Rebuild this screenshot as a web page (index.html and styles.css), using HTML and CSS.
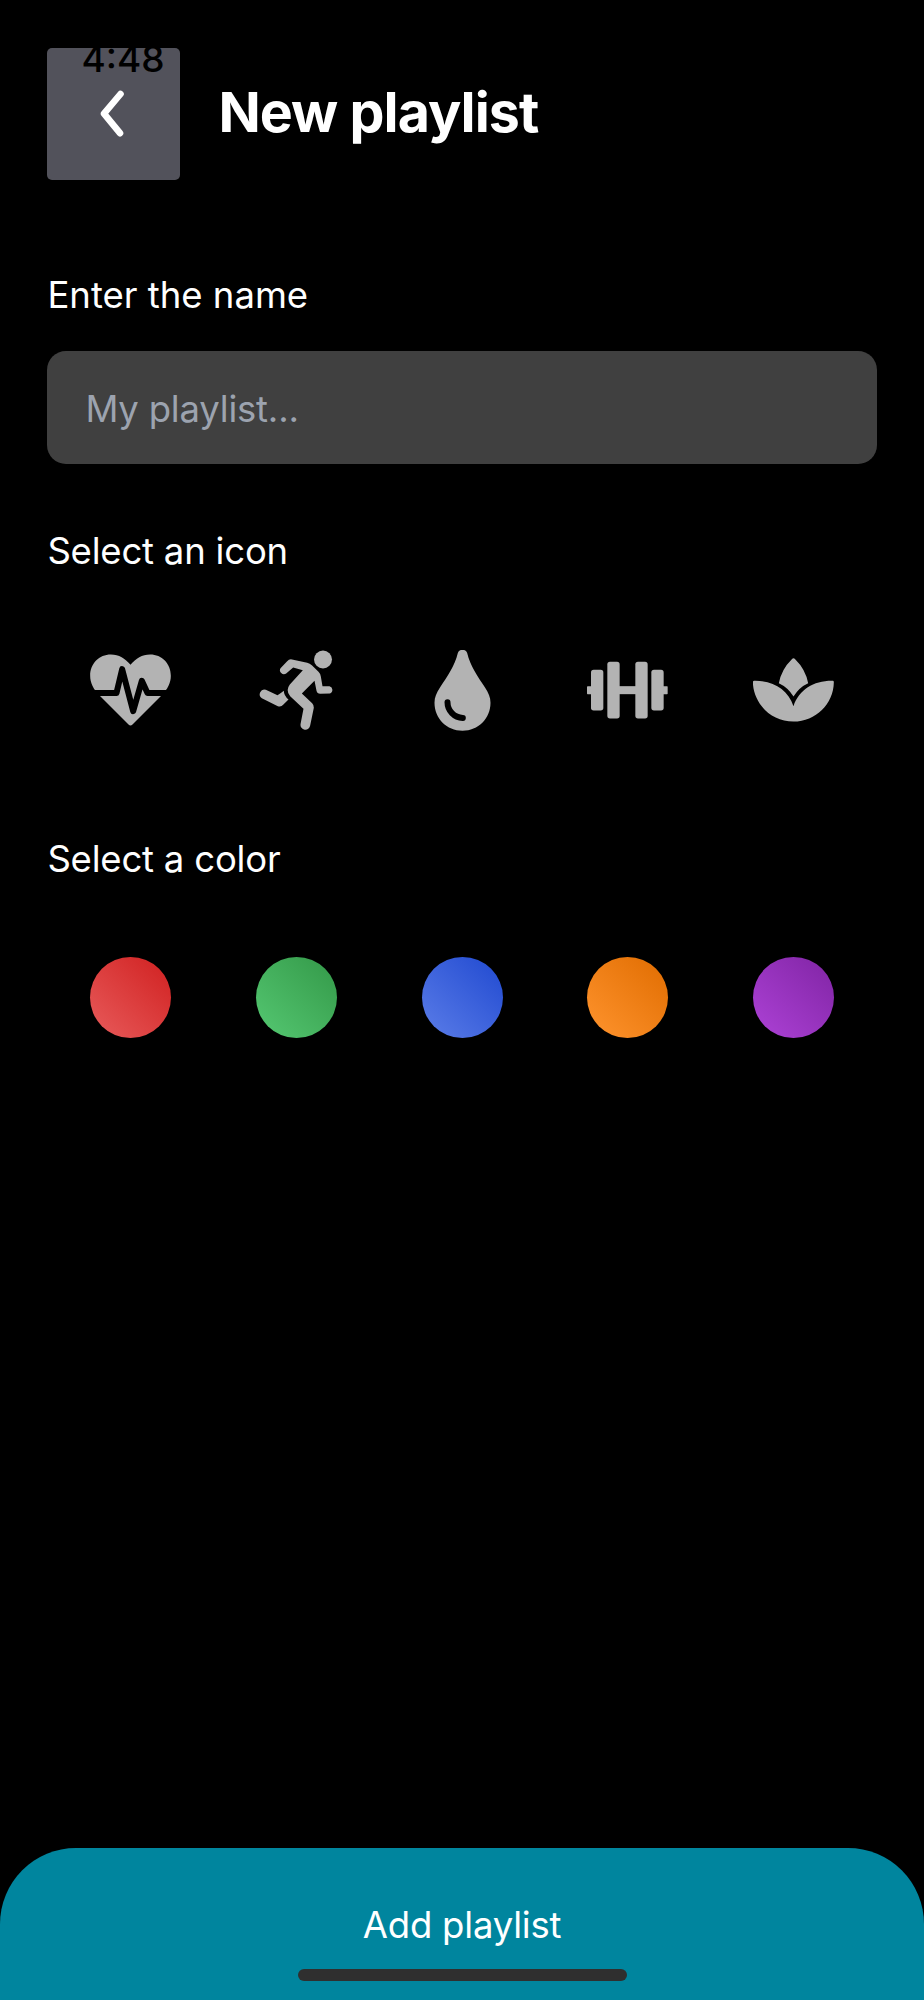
FILE: index.html
```html
<!DOCTYPE html>
<html lang="en">
<head>
<meta charset="utf-8">
<title>New playlist</title>
<link rel="stylesheet" href="styles.css">
</head>
<body>
<div class="screen">
  <header class="header">
    <button class="back" aria-label="Back">
      <svg class="chevron" viewBox="0 0 24 48"><path d="M20.5 4 4 23.7 20 43.2"/></svg>
      <span class="time">4:48</span>
    </button>
    <h1 class="title">New playlist</h1>
  </header>

  <main class="form">
    <section class="group">
      <div class="label label-name">Enter the name</div>
      <div class="field">My playlist...</div>
    </section>

    <section class="group">
      <div class="label">Select an icon</div>
      <div class="row">
        <div class="cell"><svg class="icon" viewBox="59.5 58.5 243 243">
          <path d="M181 103C164 84 147 72 122 72C87 72 60 99 60 136C60 158 70 177 88 195L175 282Q181 288 187 282L274 195C292 177 302 158 302 136C302 99 275 72 240 72C215 72 198 84 181 103Z"/>
          <path class="pulse" d="M50 187.500H139L156 116L189 242L215 151L232 187.500H315"/>
        </svg></div>
        <div class="cell"><svg class="icon" viewBox="557.5 58.500 243 243">
          <circle cx="758.500" cy="87" r="27"/>
          <path d="M662 86L711 97Q719 99 725 104L745 124Q751 130 752 138L757 167L778 167A11.500 11.500 0 0 1 779 189L750 190Q741 190 739 181L733 151L695 189L726 218Q732 224 731 232L720 285A14.500 14.500 0 0 1 691 281L700 235L660 197Q645 180 659 162L698 119L669 111L648 129A12 12 0 0 1 631 113L651 92Q656 86 662 86Z"/>
          <path d="M587 178L622 194Q630 190 641 181Q641 196 655 207L639 223Q633 230 623 227L575 203A14 14 0 0 1 587 178Z"/>
        </svg></div>
        <div class="cell"><svg class="icon" viewBox="34.500 58 243 243">
          <path d="M142 67C146 54 166 54 170 67C179 106 202 138 224 171C234 187 240 199 240 216C240 263 203 300 156 300C109 300 72 263 72 216C72 199 78 187 88 171C110 138 133 106 142 67Z"/>
          <path class="shine" d="M111 215C111 240 131 261 157 262"/>
        </svg></div>
        <div class="cell"><svg class="icon" viewBox="532 58.500 243 243">
          <rect x="532" y="167" width="18" height="24" rx="2"/>
          <rect x="756" y="167" width="18" height="24" rx="2"/>
          <rect x="620" y="167" width="65" height="24"/>
          <rect x="544" y="118" width="37" height="122" rx="8"/>
          <rect x="593" y="94" width="37" height="170" rx="8"/>
          <rect x="677" y="94" width="37" height="170" rx="8"/>
          <rect x="725" y="118" width="37" height="122" rx="8"/>
        </svg></div>
        <div class="cell"><svg class="icon" viewBox="69.500 58.500 243 243">
          <path d="M186 86Q191 81 196 86Q227 116 235 158Q208 170 191 198Q175 171 147 158Q155 116 186 86Z"/>
          <path d="M73 151C130 150 174 177 191 227C208 177 252 150 309 151Q312 151 312 155C311 220 258 273 191 273C124 273 71 220 69 155Q69 151 73 151Z"/>
        </svg></div>
      </div>
    </section>

    <section class="group">
      <div class="label">Select a color</div>
      <div class="row">
        <div class="cell"><span class="dot red"></span></div>
        <div class="cell"><span class="dot green"></span></div>
        <div class="cell"><span class="dot blue"></span></div>
        <div class="cell"><span class="dot orange"></span></div>
        <div class="cell"><span class="dot purple"></span></div>
      </div>
    </section>
  </main>

  <footer class="footer">
    Add playlist
    <span class="home"></span>
  </footer>
</div>
</body>
</html>
```
FILE: styles.css
```css
* { box-sizing: border-box; }
body { margin: 0; background: #000; }
.screen {
  display: flex;
  flex-direction: column;
  width: 924px;
  height: 2000px;
  padding-top: 47.5px;
  background: #000;
  color: #fff;
  font-family: Inter, "Liberation Sans", sans-serif;
  font-size: 36.5px;
  letter-spacing: -0.2px;
  overflow: hidden;
}
.header { display: flex; align-items: center; gap: 38.5px; padding: 0 47.4px; }
.back {
  position: relative;
  display: flex;
  align-items: center;
  justify-content: center;
  width: 132.5px;
  height: 132.5px;
  padding: 0;
  border: 0;
  border-radius: 5px;
  background: #52525b;
  font-family: inherit;
}
.chevron { width: 24px; height: 48px; margin-right: 3px; fill: none; stroke: #fff; stroke-width: 6.6; stroke-linecap: round; stroke-linejoin: round; }
.time {
  position: absolute;
  left: 34px;
  top: -11px;
  line-height: 44px;
  font-size: 37px;
  font-weight: 500;
  letter-spacing: 0;
  color: #000;
}
.title { margin: 0; padding-bottom: 3px; font-size: 55.5px; line-height: 66px; font-weight: 700; letter-spacing: -0.95px; white-space: nowrap; }
.form { display: flex; flex-direction: column; gap: 57.5px; padding: 86px 47.4px 0; }
.group { display: flex; flex-direction: column; gap: 28px; }
.label { height: 57px; line-height: 59px; white-space: nowrap; }
.label-name { letter-spacing: 0; }
.field {
  height: 113px;
  margin-bottom: 0.5px;
  padding: 0 38px;
  border-radius: 19px;
  background: #404040;
  color: #9ca3af;
  line-height: 116px;
}
.row { display: grid; grid-template-columns: repeat(5, 1fr); height: 165.500px; }
.cell { display: flex; align-items: center; justify-content: center; }
.icon { width: 81px; height: 81px; margin-top: 1px; fill: #b3b3b3; }
.pulse, .shine { fill: none; stroke: #000; stroke-width: 18; stroke-linejoin: round; stroke-linecap: round; }
.dot { width: 81px; height: 81px; border-radius: 50%; }
.red { background: linear-gradient(45deg, #e85b5b, #d02020); }
.green { background: linear-gradient(45deg, #55c872, #339848); }
.blue { background: linear-gradient(45deg, #5b7de8, #2049d0); }
.orange { background: linear-gradient(45deg, #ff942e, #e06c00); }
.purple { background: linear-gradient(45deg, #ad42d6, #8024a4); }
.footer {
  position: relative;
  display: flex;
  justify-content: center;
  height: 152px;
  margin-top: auto;
  padding-top: 49px;
  border-radius: 76px 76px 0 0;
  background: #00859e;
  line-height: 57px;
}
.home {
  position: absolute;
  left: 298px;
  bottom: 19px;
  width: 329px;
  height: 12px;
  border-radius: 6px;
  background: #2f2f2f;
}
```
